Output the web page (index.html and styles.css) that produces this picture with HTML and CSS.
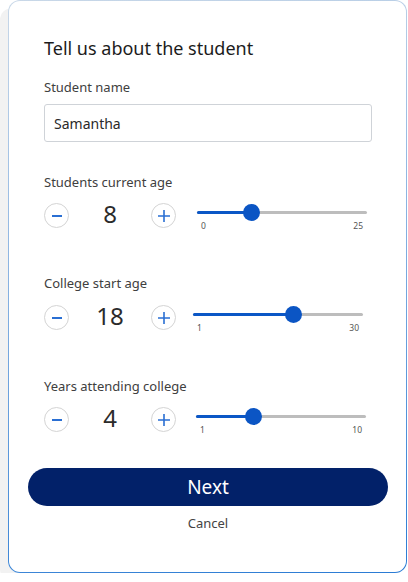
FILE: index.html
```html
<!DOCTYPE html>
<html>
<head>
<meta charset="utf-8">
<link rel="stylesheet" href="styles.css">
</head>
<body>
<div class="card">
  <div class="card-inner">
    <h1 class="title">Tell us about the student</h1>
    <label class="label label-name" for="name">Student name</label>
    <input class="text-input" id="name" type="text" value="Samantha">

    <div class="group group-1">
      <div class="label">Students current age</div>
      <div class="stepper-row">
        <button class="circle-btn" aria-label="decrease"><svg width="12" height="12" viewBox="0 0 12 12"><path d="M1 6h10" stroke="#2a6fd3" stroke-width="2"/></svg></button>
        <div class="value">8</div>
        <button class="circle-btn" aria-label="increase"><svg width="14" height="14" viewBox="0 0 14 14"><path d="M1 7h12M7 1v12" stroke="#2a6fd3" stroke-width="1.6"/></svg></button>
        <div class="slider slider-1">
          <div class="track"><div class="fill" style="width:32%"></div><div class="thumb" style="left:32%"></div></div>
          <div class="ticks"><span>0</span><span>25</span></div>
        </div>
      </div>
    </div>

    <div class="group group-2">
      <div class="label">College start age</div>
      <div class="stepper-row">
        <button class="circle-btn" aria-label="decrease"><svg width="12" height="12" viewBox="0 0 12 12"><path d="M1 6h10" stroke="#2a6fd3" stroke-width="2"/></svg></button>
        <div class="value">18</div>
        <button class="circle-btn" aria-label="increase"><svg width="14" height="14" viewBox="0 0 14 14"><path d="M1 7h12M7 1v12" stroke="#2a6fd3" stroke-width="1.6"/></svg></button>
        <div class="slider slider-2">
          <div class="track"><div class="fill" style="width:58.6%"></div><div class="thumb" style="left:58.6%"></div></div>
          <div class="ticks"><span>1</span><span>30</span></div>
        </div>
      </div>
    </div>

    <div class="group group-3">
      <div class="label">Years attending college</div>
      <div class="stepper-row">
        <button class="circle-btn" aria-label="decrease"><svg width="12" height="12" viewBox="0 0 12 12"><path d="M1 6h10" stroke="#2a6fd3" stroke-width="2"/></svg></button>
        <div class="value">4</div>
        <button class="circle-btn" aria-label="increase"><svg width="14" height="14" viewBox="0 0 14 14"><path d="M1 7h12M7 1v12" stroke="#2a6fd3" stroke-width="1.6"/></svg></button>
        <div class="slider slider-3">
          <div class="track"><div class="fill" style="width:33.3%"></div><div class="thumb" style="left:33.3%"></div></div>
          <div class="ticks"><span>1</span><span>10</span></div>
        </div>
      </div>
    </div>

    <button class="next-btn">Next</button>
    <div class="cancel">Cancel</div>
  </div>
</div>
</body>
</html>
```

FILE: styles.css
```css
* { box-sizing: border-box; }
html, body {
  margin: 0;
  padding: 0;
  background: #ffffff;
  font-family: "Noto Sans", "Open Sans", sans-serif;
}
.card {
  margin-left: 8px;
  width: 399px;
  height: 573px;
  padding: 1px;
  border-radius: 12px;
  background: linear-gradient(170deg, #c9d8e8 0%, #8fb6e2 40%, #2a7bd4 100%);
  box-shadow: -8px 8px 0 #f2f2f2;
}
.card-inner {
  height: 100%;
  background: #fff;
  border-radius: 11px;
  padding: 35px 34px 0 35px;
  display: flex;
  flex-direction: column;
}
.title {
  margin: 0;
  font-size: 18px;
  line-height: 24px;
  font-weight: 400;
  color: #1c1c1c;
}
.label {
  display: block;
  font-size: 13px;
  line-height: 18px;
  color: #404040;
}
.label-name {
  margin-top: 18px;
}
.text-input {
  margin-top: 8px;
  height: 38px;
  width: 100%;
  border: 1px solid #cfd3d8;
  border-radius: 3px;
  padding: 0 9px;
  font-family: "Noto Sans", "Open Sans", sans-serif;
  font-size: 14px;
  color: #2a2a2a;
  outline: none;
}
.group {
  display: flex;
  flex-direction: column;
}
.group-1 { margin-top: 31px; }
.group-2 { margin-top: 43px; }
.group-3 { margin-top: 44px; }
.stepper-row {
  margin-top: 12px;
  display: flex;
  align-items: flex-start;
}
.group-2 .stepper-row { margin-top: 13px; }
.group-3 .stepper-row { margin-top: 12px; }
.circle-btn {
  width: 25px;
  height: 25px;
  padding: 0;
  border: 1px solid #d4d4d4;
  border-radius: 50%;
  background: #fff;
  display: flex;
  align-items: center;
  justify-content: center;
  flex: none;
}
.value {
  width: 82px;
  text-align: center;
  font-size: 24px;
  line-height: 22px;
  color: #2b2b2b;
  flex: none;
}
.slider {
  width: 170px;
  margin-left: 21px;
  flex: none;
}
.slider-2 { margin-left: 17px; }
.slider-3 { margin-left: 20px; }
.track {
  position: relative;
  height: 18px;
}
.track::before {
  content: "";
  position: absolute;
  left: 0;
  right: 0;
  top: 8px;
  height: 3px;
  border-radius: 2px;
  background: #bdbdbd;
}
.fill {
  position: absolute;
  left: 0;
  top: 8px;
  height: 3px;
  border-radius: 2px;
  background: #0b57c6;
}
.thumb {
  position: absolute;
  top: 1px;
  width: 17px;
  height: 17px;
  margin-left: -8px;
  border-radius: 50%;
  background: #0b55c4;
}
.ticks {
  display: flex;
  justify-content: space-between;
  padding: 0 4px;
  font-size: 8.5px;
  line-height: 10px;
  color: #555;
}
.next-btn {
  margin-top: 33px;
  margin-left: -16px;
  width: 360px;
  height: 38px;
  border: none;
  border-radius: 19px;
  background: #022169;
  color: #fff;
  font-family: "Noto Sans", "Open Sans", sans-serif;
  font-size: 19px;
  padding: 0;
}
.cancel {
  margin-top: 8px;
  margin-left: -16px;
  width: 360px;
  text-align: center;
  font-size: 13px;
  line-height: 18px;
  color: #444;
}
```
